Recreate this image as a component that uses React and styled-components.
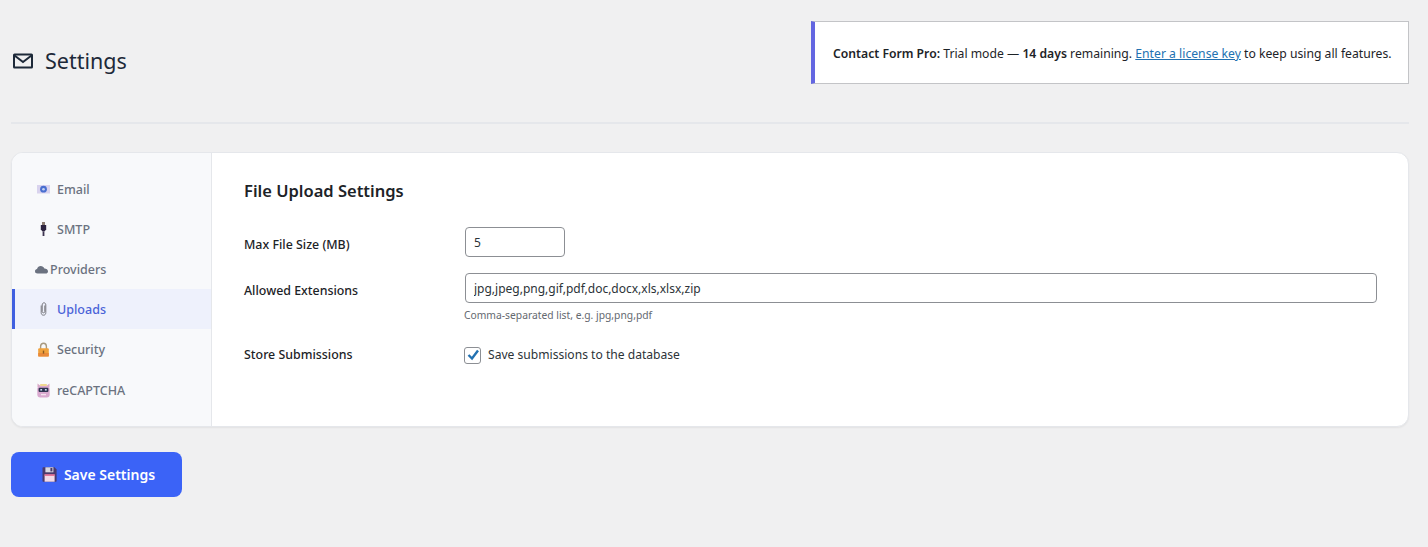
import React from 'react';
import styled, { createGlobalStyle } from 'styled-components';

const GlobalStyle = createGlobalStyle`
  html, body {
    margin: 0;
    padding: 0;
    background: #f0f0f1;
    font-family: "Noto Sans", "Open Sans", sans-serif;
    color: #1d2327;
  }
  * { box-sizing: border-box; }
`;

const MailIcon = () => (
  <svg width="22" height="22" viewBox="0 0 22 22" fill="none" stroke="#1d2939" strokeWidth="2">
    <rect x="2" y="4.5" width="18" height="13" rx="0.5" />
    <path d="M2.5 5.5 L11 12 L19.5 5.5" />
  </svg>
);

const EmailIcon = () => (
  <svg width="13" height="13" viewBox="0 0 13 13">
    <rect x="0" y="2" width="13" height="8.5" fill="#d9d3ee" />
    <circle cx="6.5" cy="6.2" r="3.4" fill="#4a6fd0" />
    <circle cx="6.5" cy="6.2" r="1.3" fill="#c4d2f2" />
  </svg>
);

const PlugIcon = () => (
  <svg width="13" height="14" viewBox="0 0 13 14">
    <rect x="5" y="0" width="3" height="3" fill="#8a7a70" />
    <path d="M3.8 3 H9.2 V7.5 L7.4 9.5 H5.6 L3.8 7.5 Z" fill="#2d2440" />
    <rect x="5.6" y="9.5" width="1.8" height="4.5" fill="#3d3450" />
  </svg>
);

const CloudIcon = () => (
  <svg width="13" height="9" viewBox="0 0 13 9">
    <path d="M2.6 8.5 C0.9 8.5 0 7.5 0 6.2 C0 5 0.9 4.2 2 4.1 C2.5 2 4 1 5.7 1 C7.4 1 8.8 2 9.4 3.5 C11.5 3.5 13 4.7 13 6.2 C13 7.6 12 8.5 10.6 8.5 Z" fill="#6b7280" />
  </svg>
);

const ClipIcon = () => (
  <svg width="13" height="14" viewBox="0 0 13 14" fill="none" stroke="#77777d" strokeWidth="1">
    <path d="M4.2 3.5 V10.6 C4.2 12.2 5.1 13.2 6.5 13.2 C7.9 13.2 8.8 12.2 8.8 10.6 V3 C8.8 1.7 8.1 0.8 7 0.8 C5.9 0.8 5.2 1.7 5.2 3 V9.5 C5.2 10.3 5.7 10.8 6.5 10.8 C7.3 10.8 7.8 10.3 7.8 9.5 V3.5" />
  </svg>
);

const LockIcon = () => (
  <svg width="13" height="15" viewBox="0 0 13 15">
    <path d="M3.6 7 V4.4 C3.6 2.5 4.8 1.2 6.5 1.2 C8.2 1.2 9.4 2.5 9.4 4.4 V7" fill="none" stroke="#a89a80" strokeWidth="1.4" />
    <rect x="1.2" y="6.2" width="10.6" height="8.3" rx="1" fill="#f0a23c" />
    <rect x="1.2" y="11" width="10.6" height="3.5" fill="#e98a3a" />
    <rect x="5.8" y="8.6" width="1.4" height="3" fill="#8a5a20" />
  </svg>
);

const RobotIcon = () => (
  <svg width="13" height="15" viewBox="0 0 13 15">
    <path d="M0.5 0.5 L3 2.5 H10 L12.5 0.5 V4 H0.5 Z" fill="#d8a8c4" />
    <rect x="3.2" y="1" width="6.6" height="2" fill="#f0d890" />
    <rect x="0.3" y="3" width="12.4" height="11.5" rx="3" fill="#d9a9cf" />
    <rect x="1.6" y="4.8" width="9.8" height="4.2" rx="1" fill="#2f3450" />
    <rect x="3.3" y="6" width="1.8" height="1.6" fill="#c8dcf0" />
    <rect x="7.9" y="6" width="1.8" height="1.6" fill="#c8dcf0" />
    <rect x="4" y="10.9" width="5" height="1.4" fill="#f4e2ee" />
  </svg>
);

const FloppyIcon = () => (
  <svg width="15" height="15" viewBox="0 0 15 15">
    <path d="M0.5 1 C0.5 0.6 0.8 0.3 1.2 0.3 H12.5 L14.6 2.4 V14 C14.6 14.4 14.3 14.7 13.9 14.7 H1.2 C0.8 14.7 0.5 14.4 0.5 14 Z" fill="#4a3a6c" />
    <rect x="3.4" y="0.3" width="8" height="5" fill="#d9d7e2" />
    <rect x="8.4" y="1" width="2" height="3.4" fill="#4a3a6c" />
    <rect x="2.6" y="7.4" width="10" height="7.3" fill="#f3dbe8" />
    <rect x="2.6" y="7.4" width="10" height="1.3" fill="#e24d7a" />
  </svg>
);

const navItems = [
  { label: 'Email', icon: <EmailIcon /> },
  { label: 'SMTP', icon: <PlugIcon /> },
  { label: 'Providers', icon: <CloudIcon />, tight: true },
  { label: 'Uploads', icon: <ClipIcon />, active: true },
  { label: 'Security', icon: <LockIcon /> },
  { label: 'reCAPTCHA', icon: <RobotIcon /> },
];

const Page = styled.div`
  padding: 21px 19px 50px 11px;
  min-height: 547px;
`;

const Header = styled.header`
  display: flex;
  justify-content: space-between;
  align-items: center;
  padding-bottom: 38px;
  border-bottom: 2px solid #e5e7eb;
`;

const Title = styled.h1`
  display: flex;
  align-items: center;
  gap: 11px;
  margin: 16px 0 0 1px;
  font-size: 21.5px;
  font-weight: 400;
  color: #1d2939;
  line-height: 30px;
`;

const Notice = styled.div`
  width: 598px;
  height: 63px;
  display: flex;
  align-items: center;
  padding: 2px 0 0 18px;
  background: #fff;
  border: 1px solid #c3c4c7;
  border-left: 4px solid #6366e1;
  font-size: 12.2px;
  white-space: nowrap;
  color: #1d2327;
  strong { font-weight: 600; }
  span { white-space: pre; }
  a { color: #2271b1; text-decoration: underline; }
`;

const Card = styled.section`
  display: flex;
  height: 275px;
  margin-top: 28px;
  background: #fff;
  border: 1px solid #e5e7eb;
  border-radius: 12px;
  box-shadow: 0 1px 2px rgba(0, 0, 0, 0.06);
  overflow: hidden;
`;

const Sidebar = styled.nav`
  width: 200px;
  flex-shrink: 0;
  padding-top: 16px;
  background: #f8f9fb;
  border-right: 1px solid #e5e7eb;
`;

const NavItem = styled.a`
  display: flex;
  align-items: center;
  gap: ${p => (p.$tight ? '2px' : '7px')};
  height: 40px;
  padding-left: ${p => (p.$tight ? '20px' : '22px')};
  border-left: 3px solid ${p => (p.$active ? '#3f5fe0' : 'transparent')};
  background: ${p => (p.$active ? '#eef1fc' : 'transparent')};
  color: ${p => (p.$active ? '#4a63d8' : '#6b7280')};
  font-size: 12.5px;
  font-weight: 500;
  &:last-child { height: 42px; }
`;

const Content = styled.div`
  flex: 1;
  padding: 26px 31px 0 32px;
`;

const SectionTitle = styled.h2`
  margin: 0 0 24px;
  font-size: 16.5px;
  font-weight: 600;
  line-height: 24px;
  color: #1d2327;
`;

const Row = styled.div`
  display: grid;
  grid-template-columns: 221px 1fr;
  align-items: start;
  margin-bottom: ${p => p.$gap};
`;

const Label = styled.label`
  padding-top: ${p => p.$top || '3px'};
  font-size: 12.4px;
  font-weight: 500;
  line-height: 30px;
  color: #1d2327;
`;

const Input = styled.input`
  display: block;
  width: ${p => p.$width || '100%'};
  height: 30px;
  padding: 0 8px;
  background: #fff;
  border: 1px solid #8c8f94;
  border-radius: 4px;
  font-family: inherit;
  font-size: 12px;
  color: #2c3338;
`;

const Hint = styled.p`
  margin: 5px 0 0 -1px;
  font-size: 10.3px;
  line-height: 14px;
  color: #646970;
`;

const CheckLabel = styled.label`
  display: flex;
  align-items: center;
  gap: 7px;
  margin-left: -1px;
  font-size: 12.1px;
  line-height: 30px;
  color: #2c3338;
`;

const CheckBox = styled.span`
  display: flex;
  align-items: center;
  justify-content: center;
  width: 17px;
  height: 17px;
  background: #fff;
  border: 1px solid #8c8f94;
  border-radius: 3px;
`;

const SaveButton = styled.button`
  display: flex;
  align-items: center;
  justify-content: center;
  gap: 7px;
  width: 171px;
  height: 45px;
  margin-top: 25px;
  padding: 0 0 0 4px;
  background: #3b63f7;
  border: none;
  border-radius: 8px;
  color: #fff;
  font-family: inherit;
  font-size: 14px;
  font-weight: 600;
`;

export default function App() {
  return (
    <>
      <GlobalStyle />
      <Page>
        <Header>
          <Title>
            <MailIcon />
            Settings
          </Title>
          <Notice>
            <span><strong>Contact Form Pro:</strong> Trial mode — <strong>14 days</strong> remaining. <a href="#license">Enter a license key</a> to keep using all features.</span>
          </Notice>
        </Header>

        <Card>
          <Sidebar>
            {navItems.map(item => (
              <NavItem key={item.label} $active={item.active} $tight={item.tight}>
                {item.icon}
                {item.label}
              </NavItem>
            ))}
          </Sidebar>
          <Content>
            <SectionTitle>File Upload Settings</SectionTitle>
            <Row $gap="13px">
              <Label>Max File Size (MB)</Label>
              <Input $width="100px" defaultValue="5" />
            </Row>
            <Row $gap="18px">
              <Label>Allowed Extensions</Label>
              <div>
                <Input defaultValue="jpg,jpeg,png,gif,pdf,doc,docx,xls,xlsx,zip" />
                <Hint>Comma-separated list, e.g. jpg,png,pdf</Hint>
              </div>
            </Row>
            <Row $gap="0">
              <Label $top="0">Store Submissions</Label>
              <CheckLabel>
                <CheckBox>
                  <svg width="14" height="14" viewBox="0 0 14 14" fill="none" stroke="#2271b1" strokeWidth="2.4">
                    <path d="M2.5 7 L6 10.5 L12 2.5" />
                  </svg>
                </CheckBox>
                Save submissions to the database
              </CheckLabel>
            </Row>
          </Content>
        </Card>

        <SaveButton>
          <FloppyIcon />
          Save Settings
        </SaveButton>
      </Page>
    </>
  );
}
